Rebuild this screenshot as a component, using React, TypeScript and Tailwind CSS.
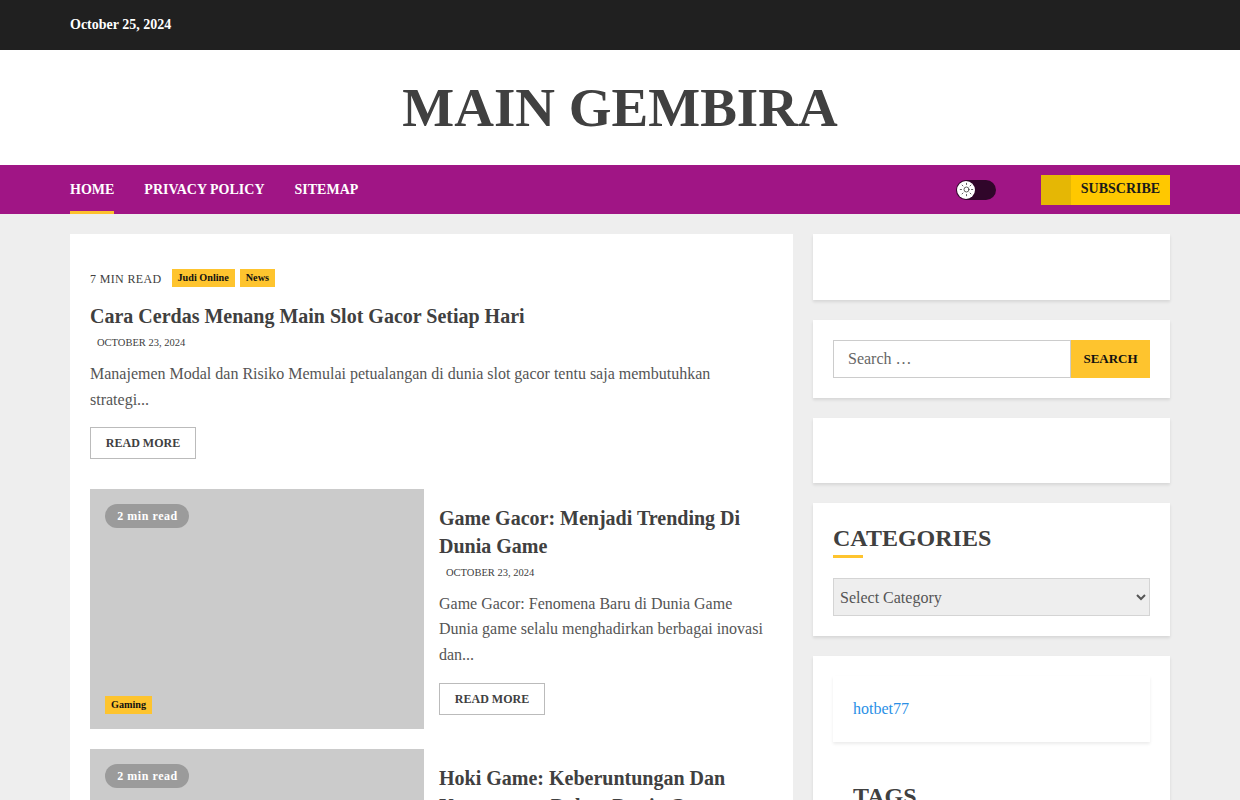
import { Sun } from 'lucide-react'

const serif = "font-['Liberation_Serif','Times_New_Roman',serif]"

function Tag({ label }: { label: string }) {
  return (
    <span className="bg-[#fec42e] px-[6px] h-[18px] flex items-center text-[10.2px] font-bold text-[#111] pb-px">
      {label}
    </span>
  )
}

function ReadMore() {
  return (
    <a className="inline-flex items-center justify-center w-[106px] h-[32px] border border-[#bbb] text-[12px] font-bold text-[#404040]">
      READ MORE
    </a>
  )
}

function ReadBadge() {
  return (
    <span className="absolute left-[15px] top-[15px] h-[24px] w-[84px] rounded-full bg-[#9b9b9b] text-white text-[12px] font-bold tracking-[0.55px] flex items-center justify-center pl-px">
      2 min read
    </span>
  )
}

function Card({ className = '', children }: { className?: string; children?: React.ReactNode }) {
  return <div className={`bg-white shadow-[0_2px_3px_rgba(0,0,0,0.1)] ${className}`}>{children}</div>
}

export default function App() {
  return (
    <div className={`h-screen overflow-hidden bg-[#eeeeee] text-[#404040] ${serif}`}>
      <div className="h-[50px] bg-[#202020] px-[70px] flex items-center pb-px">
        <span className="text-[14px] font-bold text-white">October 25, 2024</span>
      </div>

      <div className="h-[115px] bg-white flex items-center justify-center">
        <h1 className="text-[55px] font-bold text-[#404040] leading-none">MAIN GEMBIRA</h1>
      </div>

      <nav className="h-[49px] bg-[#a01585] px-[70px] flex items-center justify-between">
        <ul className="flex gap-[30px] h-full text-[14px] font-bold text-white">
          <li className="flex items-center border-b-[3px] border-[#fdc12d] pt-[3px]">HOME</li>
          <li className="flex items-center">PRIVACY POLICY</li>
          <li className="flex items-center">SITEMAP</li>
        </ul>
        <div className="flex items-center">
          <div className="w-[40px] h-[20px] rounded-full bg-[#30062a] flex items-center pl-px mr-[45px]">
            <span className="w-[18px] h-[18px] rounded-full bg-white flex items-center justify-center">
              <Sun size={15} strokeWidth={1.25} className="text-[#333]" />
            </span>
          </div>
          <div className="flex h-[30px] w-[129px] bg-[#ffc800]">
            <span className="w-[30px] bg-[#e5b705]" />
            <span className="flex-1 flex items-center justify-center text-[14px] font-bold text-[#1a1a1a] pb-[3px]">
              SUBSCRIBE
            </span>
          </div>
        </div>
      </nav>

      <main className="px-[70px] pt-[20px] flex gap-[20px] items-start">
        <section className="w-[723px] bg-white px-[20px] pt-[35px] shrink-0">
          <div className="flex items-center h-[18px]">
            <span className="text-[12px] tracking-[0.35px] text-[#404040] mr-[10px] pt-[2px]">7 MIN READ</span>
            <div className="flex gap-[5px]">
              <Tag label="Judi Online" />
              <Tag label="News" />
            </div>
          </div>
          <h2 className="mt-[15px] text-[20px] leading-[28px] font-bold text-[#404040]">
            Cara Cerdas Menang Main Slot Gacor Setiap Hari
          </h2>
          <div className="mt-[5px] pl-[7px] text-[10.5px] leading-[16px] text-[#404040]">OCTOBER 23, 2024</div>
          <p className="mt-[10px] text-[16px] leading-[25.6px] text-[#555]">
            Manajemen Modal dan Risiko Memulai petualangan di dunia slot gacor tentu saja membutuhkan strategi...
          </p>
          <div className="mt-[15px]">
            <ReadMore />
          </div>

          <article className="mt-[30px] flex gap-[15px]">
            <div className="relative w-[334px] h-[240px] bg-[#cbcbcb] shrink-0">
              <ReadBadge />
              <span className="absolute left-[15px] bottom-[15px]">
                <Tag label="Gaming" />
              </span>
            </div>
            <div className="flex-1 pt-[15px] pr-[5px]">
              <h2 className="text-[20px] leading-[28px] font-bold text-[#404040]">
                Game Gacor: Menjadi Trending Di Dunia Game
              </h2>
              <div className="mt-[5px] pl-[7px] text-[10.5px] leading-[16px] text-[#404040]">OCTOBER 23, 2024</div>
              <p className="mt-[9.7px] text-[16px] leading-[25.6px] text-[#555]">
                Game Gacor: Fenomena Baru di Dunia Game Dunia game selalu menghadirkan berbagai inovasi dan...
              </p>
              <div className="mt-[15.3px]">
                <ReadMore />
              </div>
            </div>
          </article>

          <article className="mt-[20px] flex gap-[15px]">
            <div className="relative w-[334px] h-[240px] bg-[#cbcbcb] shrink-0">
              <ReadBadge />
            </div>
            <div className="flex-1 pt-[15px] pr-[5px]">
              <h2 className="text-[20px] leading-[28px] font-bold text-[#404040]">
                Hoki Game: Keberuntungan Dan Kesempatan Dalam Dunia Game
              </h2>
            </div>
          </article>
        </section>

        <aside className="w-[357px] flex flex-col gap-[20px]">
          <Card className="h-[66px]" />
          <Card className="p-[20px] flex">
            <div className="flex-1 h-[38px] border border-[#ccc] px-[14px] flex items-center text-[16px] text-[#666]">
              Search …
            </div>
            <div className="w-[79px] h-[38px] bg-[#fec42e] flex items-center justify-center text-[13px] font-bold text-[#111]">
              SEARCH
            </div>
          </Card>
          <Card className="h-[65px]" />
          <Card className="p-[20px] pb-[20px]">
            <h3 className="text-[24px] leading-[30px] font-bold text-[#404040]">CATEGORIES</h3>
            <div className="w-[30px] h-[3px] bg-[#fec42e] mt-[2px]" />
            <select className="mt-[20px] w-full h-[38px] border border-[#d4d4d4] bg-[#eeeeee] text-[16px] text-[#555] pl-[2px]">
              <option>Select Category</option>
            </select>
          </Card>
          <Card className="p-[20px]">
            <div className="h-[66px] shadow-[0_2px_3px_rgba(0,0,0,0.08)] px-[20px] flex items-center">
              <a className="text-[16px] text-[#2a8fe6]">hotbet77</a>
            </div>
            <div className="mt-[20px] px-[20px] pt-[19px]">
              <h3 className="text-[24px] leading-[30px] font-bold text-[#404040]">TAGS</h3>
            </div>
          </Card>
        </aside>
      </main>
    </div>
  )
}
